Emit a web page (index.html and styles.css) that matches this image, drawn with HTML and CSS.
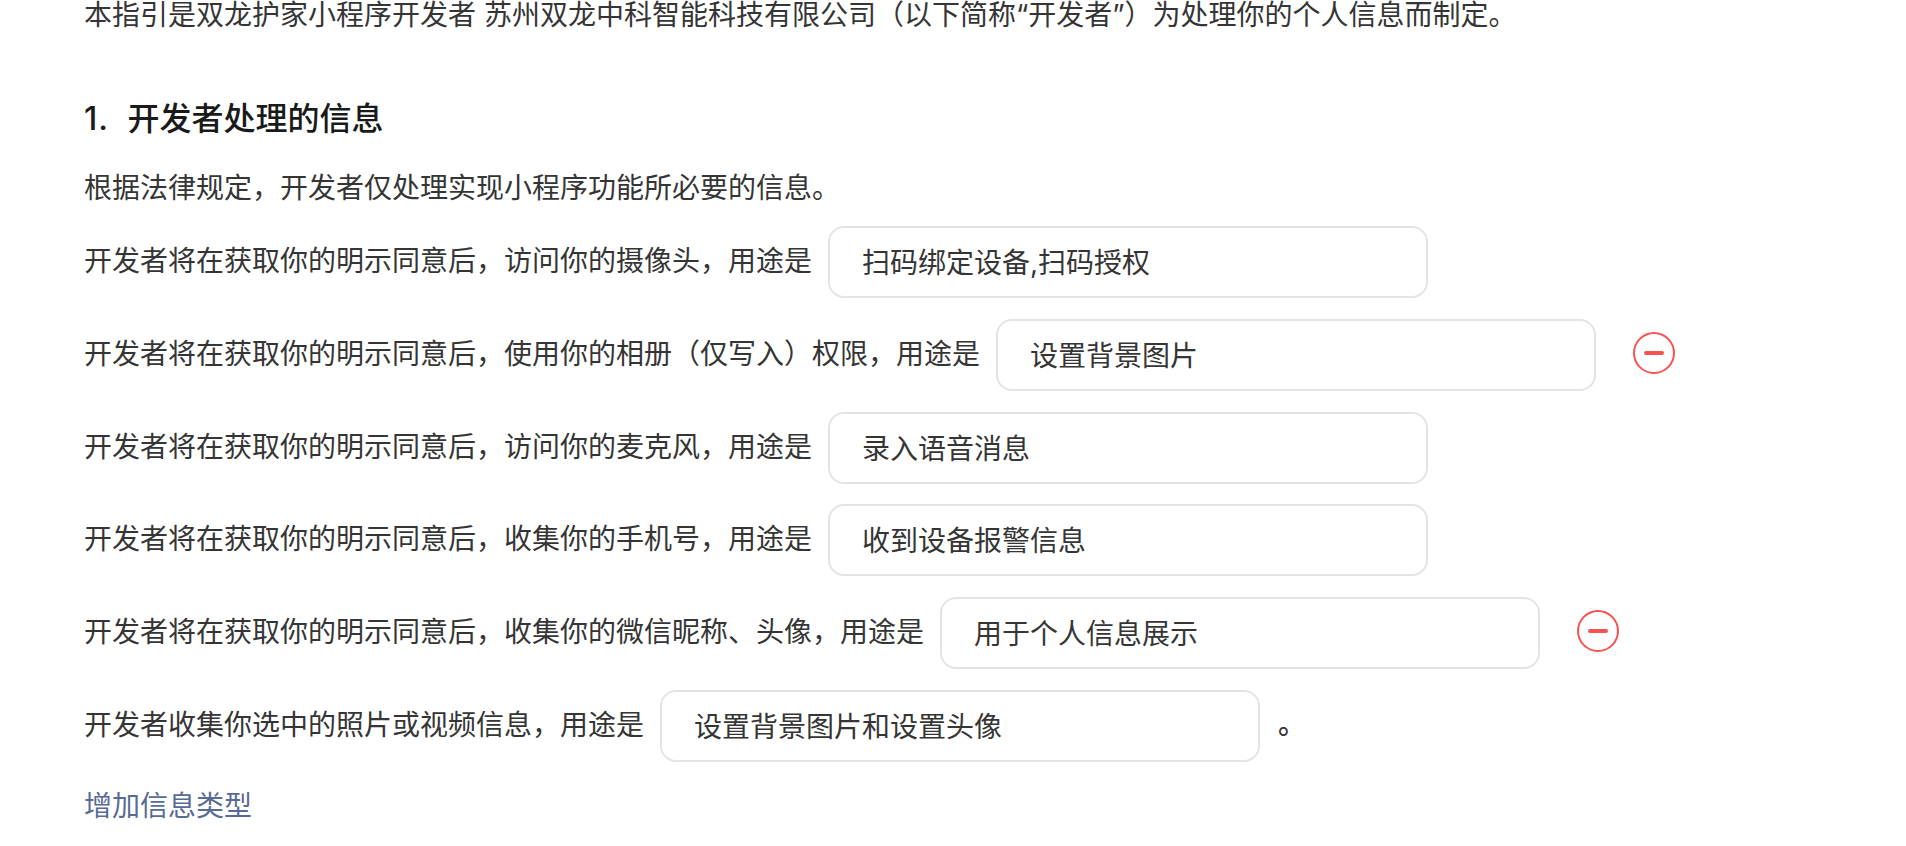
FILE: index.html
```html
<!DOCTYPE html>
<html lang="zh-CN">
<head>
    <meta charset="UTF-8">
    <title>小程序用户隐私保护指引</title>
    <link rel="stylesheet" href="styles.css">
</head>
<body>
    <div class="container">
        <p class="intro">本指引是双龙护家小程序开发者 苏州双龙中科智能科技有限公司（以下简称“开发者”）为处理你的个人信息而制定。</p>

        <h2><span class="num">1.</span>开发者处理的信息</h2>
        <p class="desc">根据法律规定，开发者仅处理实现小程序功能所必要的信息。</p>

        <div class="form-group">
            <label for="camera">开发者将在获取你的明示同意后，访问你的摄像头，用途是</label>
            <input type="text" id="camera" value="扫码绑定设备,扫码授权">
        </div>

        <div class="form-group">
            <label for="album">开发者将在获取你的明示同意后，使用你的相册（仅写入）权限，用途是</label>
            <input type="text" id="album" value="设置背景图片">
            <button type="button" class="remove" aria-label="删除">
                <svg width="42" height="42" viewBox="0 0 42 42">
                    <circle cx="21" cy="21" r="20"/>
                    <path d="M13 21h16"/>
                </svg>
            </button>
        </div>

        <div class="form-group">
            <label for="mic">开发者将在获取你的明示同意后，访问你的麦克风，用途是</label>
            <input type="text" id="mic" value="录入语音消息">
        </div>

        <div class="form-group">
            <label for="phone">开发者将在获取你的明示同意后，收集你的手机号，用途是</label>
            <input type="text" id="phone" value="收到设备报警信息">
        </div>

        <div class="form-group">
            <label for="profile">开发者将在获取你的明示同意后，收集你的微信昵称、头像，用途是</label>
            <input type="text" id="profile" value="用于个人信息展示">
            <button type="button" class="remove" aria-label="删除">
                <svg width="42" height="42" viewBox="0 0 42 42">
                    <circle cx="21" cy="21" r="20"/>
                    <path d="M13 21h16"/>
                </svg>
            </button>
        </div>

        <div class="form-group">
            <label for="photo">开发者收集你选中的照片或视频信息，用途是</label>
            <input type="text" id="photo" value="设置背景图片和设置头像">
            <span class="end">。</span>
        </div>

        <a class="add">增加信息类型</a>
    </div>
</body>
</html>
```
FILE: styles.css
```css
* {
    box-sizing: border-box;
}

body {
    margin: 0;
    background: #fff;
    color: #353535;
    font-family: Inter, "Noto Sans CJK SC", sans-serif;
    font-size: 28px;
    line-height: 42px;
    overflow: hidden;
}

.container {
    height: 846px;
    padding-left: 84px;
    white-space: nowrap;
}

.intro {
    margin: 0;
    height: 35px;
    line-height: 30px;
}

h2 {
    margin: 61px 0 0;
    color: #1a1a1a;
    font-size: 32px;
    font-weight: 500;
    line-height: 46px;
}

.num {
    display: inline-block;
    width: 43.5px;
    letter-spacing: 1px;
}

.desc {
    margin: 25px 0 17px;
}

.form-group {
    display: flex;
    align-items: center;
    height: 72px;
    margin-bottom: 20.8px;
}

.form-group label {
    margin-bottom: 2px;
}

.form-group input {
    width: 600px;
    height: 72px;
    margin-left: 16px;
    padding: 0 32px 2px;
    border: 2px solid #e4e4e4;
    border-radius: 16px;
    color: #353535;
    font: inherit;
}

.remove {
    width: 42px;
    height: 42px;
    margin: 0 0 4px 37px;
    padding: 0;
    border: 0;
    background: none;
}

.remove svg {
    display: block;
    fill: none;
    stroke: #fa5151;
    stroke-width: 2;
}

.remove path {
    stroke-width: 4;
    stroke-linecap: round;
}

.end {
    margin: 0 0 3px 18px;
    font-weight: 500;
}

.add {
    display: inline-block;
    margin-top: 2px;
    color: #576b95;
}
```
